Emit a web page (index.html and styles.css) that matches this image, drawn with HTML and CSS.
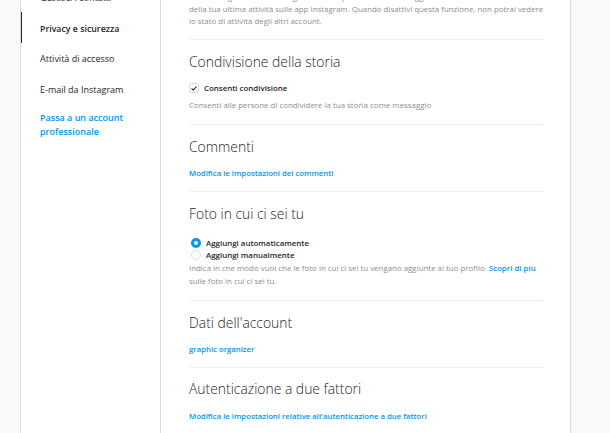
FILE: index.html
```html
<!DOCTYPE html>
<html lang="it">
<head>
<meta charset="utf-8">
<title>Privacy e sicurezza</title>
<link rel="stylesheet" href="styles.css">
</head>
<body>
<div class="page">
  <div class="card">
    <nav class="sidebar">
      <a class="nav-item">Gestisci i contatti</a>
      <a class="nav-item active">Privacy e sicurezza</a>
      <a class="nav-item">Attività di accesso</a>
      <a class="nav-item">E-mail da Instagram</a>
      <a class="nav-item pro">Passa a un account professionale</a>
    </nav>
    <main class="main">
      <section class="section first">
        <p class="desc lines">Consenti agli account che segui e a chiunque a cui invii messaggi di vedere lo stato<br>della tua ultima attività sulle app Instagram. Quando disattivi questa funzione, non potrai vedere<br>lo stato di attività degli altri account.</p>
      </section>

      <section class="section">
        <h2 class="title">Condivisione della storia</h2>
        <label class="check-row">
          <span class="checkbox">
            <svg viewBox="0 0 10 10" width="10" height="10"><path d="M2.3 5.2 L4.2 7 L7.8 3" fill="none" stroke="#262626" stroke-width="1.3" stroke-linecap="round" stroke-linejoin="round"/></svg>
          </span>
          <span class="opt-label">Consenti condivisione</span>
        </label>
        <p class="desc after-check">Consenti alle persone di condividere la tua storia come messaggio</p>
      </section>

      <section class="section">
        <h2 class="title">Commenti</h2>
        <a class="link">Modifica le impostazioni dei commenti</a>
      </section>

      <section class="section">
        <h2 class="title">Foto in cui ci sei tu</h2>
        <div class="radios">
          <label class="radio-row"><span class="radio on"></span><span class="opt-label">Aggiungi automaticamente</span></label>
          <label class="radio-row"><span class="radio"></span><span class="opt-label">Aggiungi manualmente</span></label>
        </div>
        <p class="desc lines after-radio">Indica in che modo vuoi che le foto in cui ci sei tu vengano aggiunte al tuo profilo. <a class="inline-link">Scopri di più</a><br>sulle foto in cui ci sei tu.</p>
      </section>

      <section class="section">
        <h2 class="title">Dati dell'account</h2>
        <a class="link">graphic organizer</a>
      </section>

      <section class="section last">
        <h2 class="title">Autenticazione a due fattori</h2>
        <a class="link">Modifica le impostazioni relative all'autenticazione a due fattori</a>
      </section>
    </main>
  </div>
</div>
</body>
</html>
```

FILE: styles.css
```css
* { box-sizing: border-box; }

html, body {
  margin: 0;
  padding: 0;
  background: #fafafa;
  font-family: "Open Sans", "Liberation Sans", sans-serif;
  color: #262626;
}

.page {
  height: 100vh;
  overflow: hidden;
  padding-left: 20px;
}

.card {
  width: 551px;
  height: 100%;
  background: #ffffff;
  border-left: 1px solid #dbdbdb;
  border-right: 1px solid #dbdbdb;
  display: flex;
  overflow: hidden;
}

.sidebar {
  width: 140px;
  flex: none;
  border-right: 1px solid #dbdbdb;
  margin-top: -18.3px;
  display: flex;
  flex-direction: column;
}

.nav-item {
  display: block;
  margin-left: -1px;
  padding: 9.5px 14px 7px 18px;
  font-size: 9px;
  line-height: 14px;
  color: #262626;
  border-left: 2px solid transparent;
}

.nav-item.active {
  border-left-color: #262626;
  font-weight: 600;
  font-size: 8.8px;
}

.nav-item.pro {
  color: #0095f6;
  font-weight: 600;
  padding-top: 7px;
  padding-right: 20px;
}

.main {
  flex: 1;
  min-width: 0;
  padding: 0 27px 0 28px;
  margin-top: -9.5px;
}

.section {
  padding: 12px 0 12px;
  border-bottom: 1px solid #efefef;
}

.section.first {
  padding-top: 0;
  padding-bottom: 12.5px;
}

.section.last {
  border-bottom: none;
  padding-top: 11.5px;
}

.title {
  margin: 0 0 10px;
  font-size: 13.9px;
  line-height: 20px;
  font-weight: 300;
  color: #262626;
}

.desc {
  margin: 0;
  font-size: 7.9px;
  line-height: 12px;
  color: #8e8e8e;
}

.desc.lines {
  white-space: nowrap;
}

.desc.after-check {
  margin-top: 5px;
  margin-bottom: 0.5px;
}

.desc.after-radio {
  margin-top: 1px;
  line-height: 13px;
}

.link {
  display: block;
  font-size: 7.75px;
  line-height: 12px;
  font-weight: 600;
  color: #0095f6;
}

.section.last .link {
  padding-top: 1px;
}

.inline-link {
  color: #0095f6;
  font-weight: 600;
}

.check-row {
  display: flex;
  align-items: center;
  gap: 5px;
  height: 12px;
  margin-top: 0.5px;
}

.checkbox {
  width: 10px;
  height: 10px;
  border: 1px solid #dbdbdb;
  border-radius: 2px;
  display: flex;
  align-items: center;
  justify-content: center;
}

.checkbox svg { display: block; width: 9px; height: 9px; }

.opt-label {
  font-size: 7.9px;
  line-height: 12px;
  font-weight: 600;
  color: #262626;
}

.radios {
  padding-top: 3px;
  padding-left: 2px;
}

.radio-row {
  display: flex;
  align-items: center;
  gap: 5px;
  height: 12px;
}

.radio {
  width: 10px;
  height: 10px;
  border-radius: 50%;
  border: 1px solid #dbdbdb;
  background: #fff;
}

.radio.on {
  border: 3px solid #0095f6;
}
```
